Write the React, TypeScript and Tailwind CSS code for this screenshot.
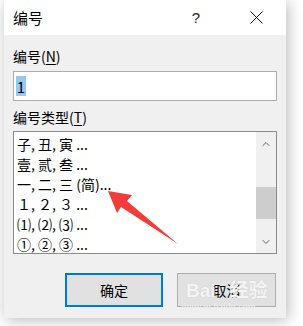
import { ChevronDown, ChevronUp } from "lucide-react";

const cjk = "font-['Microsoft_YaHei','Noto_Sans_CJK_SC',sans-serif]";

const items = [
  "子, 丑, 寅 ...",
  "壹, 贰, 叁 ...",
  "一, 二, 三 (简)...",
  "１, ２, ３ ...",
  "⑴, ⑵, ⑶ ...",
  "①, ②, ③ ...",
];

export default function App() {
  return (
    <main className={`h-[326px] w-[303px] overflow-hidden bg-white pl-[4px] text-black ${cjk}`}>
      <div className="relative flex h-[318px] w-[282px] flex-col bg-[#f0f0f0] shadow-[2px_2px_14px_rgba(0,0,0,0.28)]">
        {/* title bar */}
        <div className="flex h-[35px] items-center bg-white pl-[9px]">
          <span className="text-[15px] leading-none">编号</span>
          <span className="ml-auto mr-[50px] font-['Liberation_Sans',sans-serif] text-[15px] leading-none text-[#222]">?</span>
          <svg className="mr-[23px] h-[13px] w-[13px]" viewBox="0 0 13 13">
            <path d="M0.5 0.5 L12.5 12.5 M12.5 0.5 L0.5 12.5" stroke="#111" strokeWidth="1" fill="none" />
          </svg>
        </div>

        <div className="flex flex-col px-[9px]">
          <label className="mt-[11px] h-[20px] text-[14px] leading-[20px]">
            编号(<span className="underline underline-offset-2">N</span>)
          </label>
          <div className="mt-[5px] flex h-[30px] items-center border border-[#adadad] bg-white pl-[2px]">
            <span className="flex h-[20px] w-[10px] items-center justify-center bg-[#99c9ef] text-[15px] leading-none">1</span>
          </div>

          <label className="mt-[6px] h-[20px] text-[14px] leading-[20px]">
            编号类型(<span className="underline underline-offset-2">T</span>)
          </label>
          <div className="mt-[4px] flex h-[123px] border border-[#8c8c8c] bg-white">
            <ul className="flex-1 overflow-hidden pl-[3px] pt-[2px] text-[14px]">
              {items.map((t) => (
                <li key={t} className="h-[20px] leading-[20px] whitespace-nowrap">
                  {t}
                </li>
              ))}
            </ul>
            <div className="flex w-[20px] flex-col items-center bg-[#f0f0f0]">
              <ChevronUp className="mt-[6px] h-[12px] w-[12px] text-[#606060]" strokeWidth={2} />
              <div className="mt-[37px] h-[32px] w-full bg-[#cdcdcd]" />
              <ChevronDown className="mt-auto mb-[5px] h-[12px] w-[12px] text-[#606060]" strokeWidth={2} />
            </div>
          </div>

          <div className="mt-[19px] flex justify-end gap-[14px] pr-[1px]">
            <button className="h-[34px] w-[98px] border-2 border-[#0078d7] bg-[#e1e1e1] text-[14px]">确定</button>
            <button className="relative h-[34px] w-[99px] border border-[#adadad] bg-[#e1e1e1] text-[14px]">
              取消
              <span className="absolute left-[8px] top-[5px] font-['Liberation_Sans',sans-serif] text-[19px] font-bold leading-none text-white/85 [text-shadow:0_0_1px_#bbb]">
                Bai<span className={`ml-[14px] ${cjk}`}>经验</span>
              </span>
              <span className="absolute left-[3px] top-[28px] font-['Liberation_Serif',serif] text-[10px] leading-none text-white/80 [text-shadow:0_0_1px_#ccc]">
                jingyan.baidu.com
              </span>
            </button>
          </div>
        </div>

        {/* red annotation arrow */}
        <svg className="pointer-events-none absolute left-0 top-0" width="282" height="318" viewBox="0 0 282 318">
          <polygon points="104,191 128,195 123,201 174,244 117,207 113,213" fill="#f23b3b" />
        </svg>
      </div>
    </main>
  );
}
